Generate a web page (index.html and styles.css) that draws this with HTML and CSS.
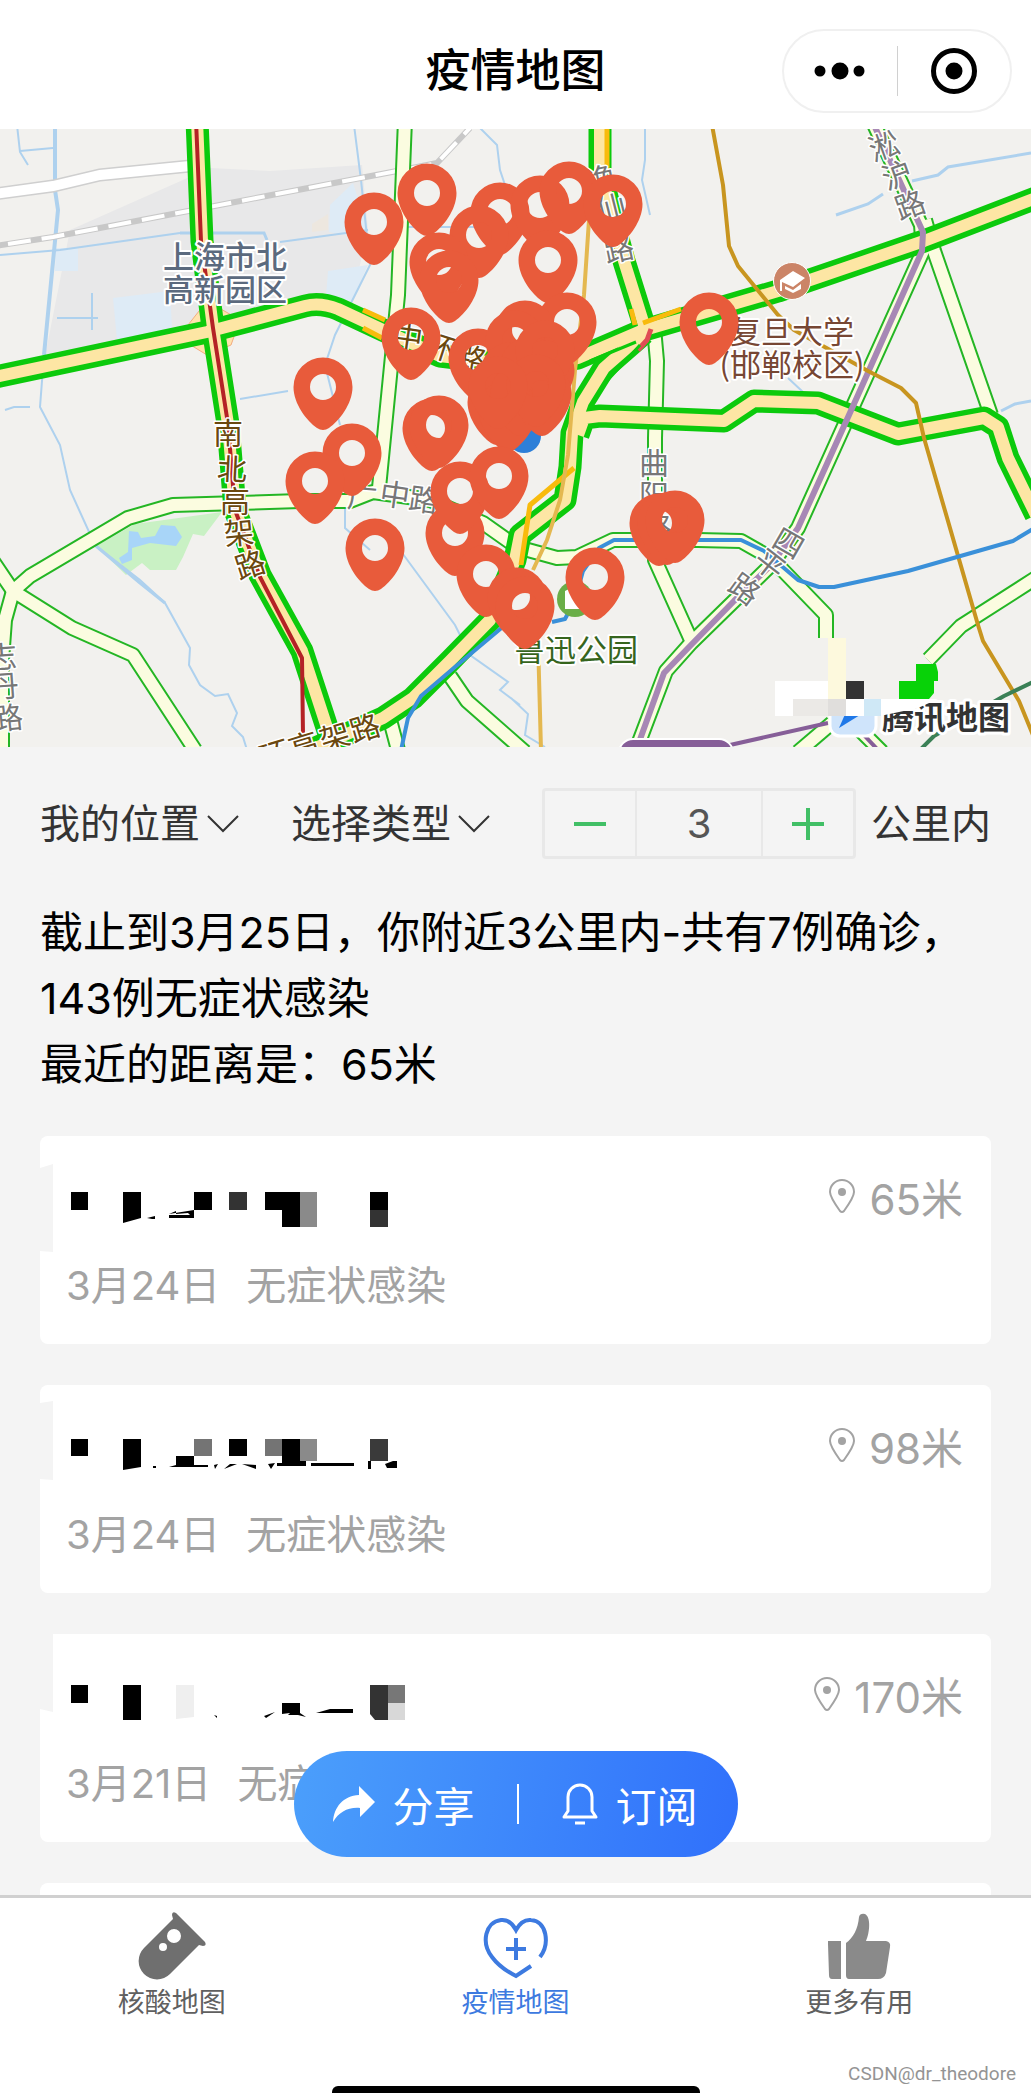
FILE: index.html
```html
<!DOCTYPE html>
<html lang="zh-CN">
<head>
    <meta charset="UTF-8">
    <meta name="viewport" content="width=device-width, initial-scale=1.0">
    <title>疫情地图</title>
    <link rel="stylesheet" href="styles.css">
</head>
<body>
<div class="app">
    <header class="header">
        <h1>疫情地图</h1>
        <div class="capsule">
            <button type="button" aria-label="更多">
                <svg width="52" height="20" viewBox="0 0 52 20"><circle cx="6" cy="10" r="5.5"/><circle cx="26" cy="10" r="8.5"/><circle cx="45" cy="10" r="5.5"/></svg>
            </button>
            <span class="capsule-line"></span>
            <button type="button" aria-label="关闭">
                <svg width="48" height="48" viewBox="0 0 48 48"><circle cx="24" cy="24" r="20.5" fill="none" stroke="#000" stroke-width="5"/><circle cx="24" cy="24" r="8.5"/></svg>
            </button>
        </div>
    </header>

    <svg class="map" viewBox="0 129 1031 618" role="img" aria-label="地图">
        <defs>
            <path id="pin" fill-rule="evenodd" d="M-29.500 0A29.500 29.500 0 0 1 29.500 0C29.500 17 16 34 6 41Q0 45 -6 41C-16 34 -29.500 17 -29.500 0ZM-13 0A13 13 0 1 0 13 0A13 13 0 1 0 -13 0Z"/>
            <g id="minor">
                <path d="M405 120L398 295L378 498"/>
                <path d="M-8 560L13 591L30 576L128 518L173 505L300 501H350L373 492L430 500L483 523L517 547L557 558L577 557L613 540H698L741 541L771 558L826 615V640"/>
                <path d="M13 591L5 620L2 660V755"/>
                <path d="M13 591L72 628L133 655L195 750"/>
                <path d="M450 676L467 701L525 752"/>
                <path d="M390 720L398 750"/>
                <path d="M654 328L657 361L655 438V560L691 640"/>
                <path d="M872 120L921 225L923 251L858 395L798 528L771 565L734 601L691 643L666 671L636 750"/>
                <path d="M925 220L934 251L991 415"/>
                <path d="M928 660L961 626L1036 578"/>
                <path d="M798 752L832 723"/>
                <path d="M858 728L882 752"/>
            </g>
            <g id="major">
                <path d="M-5 377L207 332L305 306Q320 302 338 309L385 331L440 356L520 366L578 358L641 331L778 291L924 241L1036 198"/>
                <path d="M197 120L202 241L213 328L228 424L235 510L260 575L302 651L335 752"/>
                <path d="M300 755L383 718L413 698L450 661L490 620L515 560L520 535L565 500L570 467L572 433L583 402L604 368L644 333"/>
                <path d="M578 435L584 418L600 416L724 421L754 401L818 403L898 434L984 418L998 427L1008 458L1036 515"/>
                <path d="M600 120V171L624 261L644 325"/>
            </g>
        </defs>

        <rect y="129" width="1031" height="618" fill="#f2f1ee"/>
        <path fill="#e8e8e9" d="M70 230L210 168L270 171L362 165L368 230L350 308L310 298L160 340L45 356Z"/>
        <path fill="#deebf6" d="M113 298L170 291L172 328L117 340ZM56 248H78V271H55ZM330 205L353 183L368 230L345 235L329 232ZM328 271L368 265L350 305L326 296Z"/>
        <path fill="#ede7df" d="M312 224L328 214V230L312 232Z"/>

        <!-- park and lake -->
        <path fill="#c9f1c4" d="M96 546L135 524L222 512L204 536L193 534L183 557L176 570H150L142 563L126 575Z"/>
        <path fill="#a8d5f8" d="M129 531L138 532L141 538L155 536L161 525L175 526L182 537L176 546L150 543L132 548V560L122 564L119 558L128 552Z"/>

        <g class="river">
            <path class="river-wide" d="M55 120V190L58 210L44 355"/>
            <path d="M44 355L40 407L60 445L70 490L95 545L140 580L165 603L190 648L189 665L200 685L215 696L228 694L237 713L232 726L243 737L247 750"/>
            <path class="river-thick" d="M96 546L140 583L165 603"/>
            <path d="M17 125L20 152L28 165M20 151L53 148M0 255L60 250L180 233M280 242L368 230M354 125L361 180L370 265L335 335L325 365L340 425M480 128L497 145L500 170L505 185M345 505L345 528L370 550M400 550L455 625L470 655L508 682L500 690L520 705M240 399L288 391M405 227H490M511 698L528 714L525 735L545 747M92 293V330M57 318H98M5 410L14 407H30M645 125V160L642 180L650 215M788 378L803 392"/>
            <path class="river-thick" d="M180 233H264L267 240"/>
            <path class="river-thick" d="M836 215L868 204L883 194M912 181L938 175L948 167L1031 153M1001 411L1015 404L1031 401"/>
        </g>

        <path d="M-5 194L53 186L100 175L190 166" fill="none" stroke="#cfcfcf" stroke-width="13"/>
        <path d="M-5 194L53 186L100 175L190 166" fill="none" stroke="#fff" stroke-width="10"/>
        <path d="M-5 246L53 237L230 203L397 171L437 163L470 128" fill="none" stroke="#c8c8c8" stroke-width="6"/>
        <path d="M8 244L53 237L230 203L397 171L437 163L470 128" fill="none" stroke="#fff" stroke-width="4" stroke-dasharray="23 11"/>
        <path d="M207 301L240 320L231 345L207 355L189 344L188 325Z" fill="#ffe3ad" stroke="#f3ac80"/>

        <use href="#minor" class="road minor-edge"/>
        <use href="#minor" class="road minor-fill"/>
        <use href="#major" class="road major-edge"/>
        <use href="#major" class="road major-fill"/>

        <!-- traffic -->
        <g class="road">
            <path d="M196 120L201 241L213 328L228 424L235 510L260 577L302 658L303 735" stroke="#b42226" stroke-width="4"/>
            <path d="M607 125V172M363 310L385 320M363 328L382 338M631 309L635 325M643 323L681 309M574 468L530 505L521 565" stroke="#f8bb0d" stroke-width="5"/>
            <path d="M651 329L647 340L638 350" stroke="#e04d55" stroke-width="5"/>
            <path d="M606 382L640 345M590 361L636 342" stroke="#0cca0c" stroke-width="3"/>
        </g>

        <!-- metro lines -->
        <g class="metro">
            <path stroke="#e4b850" d="M591 190L584 295L575 370L568 455L560 500L547 540L533 570M538 640L541 750"/>
            <path stroke="#a788b5" stroke-width="6" d="M874 125L923 232L922 251L858 395L798 528L771 565L734 601L691 645L664 673L638 745"/>
            <path stroke="#c8951f" d="M712 125L723 185L729 246L738 266L778 315L794 330L868 371L901 388L916 403L924 438L978 625L983 641L1019 701L1033 735"/>
            <path stroke="#3a90d9" d="M552 622L565 619L575 600L583 571L599 548L614 540H741L764 551L798 580L819 587H834L908 571L1013 541L1033 529M400 755L408 718L421 696L455 667L505 625"/>
            <path stroke="#3a8056" d="M920 750L934 736L1004 696L1033 682"/>
            <path stroke="#865e98" d="M730 745L828 723M862 733L878 750"/>
        </g>
        <rect x="619" y="739" width="114" height="30" rx="14" fill="#865e98" stroke="#fff" stroke-width="2"/>

        <circle cx="792" cy="281" r="18.500" fill="#cb8467" stroke="#fff"/>
        <path fill="#fff" d="M780 280L793 271L805 278L793 287L782 282V291H780ZM785 286L793 290L801 284V289L793 293L785 289Z"/>
        <circle cx="575" cy="599" r="18" fill="#6aae48"/>
        <path fill="#fff" d="M565 591L575 586L580 609H565Z"/>

        <g class="place blue-label">
            <text x="225" y="268">上海市北</text>
            <text x="225" y="301">高新园区</text>
        </g>
        <g class="place brown-label">
            <text x="792" y="343">复旦大学</text>
            <text x="792" y="376">(邯郸校区)</text>
        </g>
        <g class="place green-label">
            <text x="576" y="661">鲁迅公园</text>
        </g>
        <g class="street highway">
            <text x="228" y="444">南</text>
            <text x="232" y="480" transform="rotate(3 232 470)">北</text>
            <text x="235" y="512">高</text>
            <text x="239" y="544" transform="rotate(-6 239 533)">架</text>
            <text x="250" y="576" transform="rotate(-18 250 565)">路</text>
            <text x="275" y="765" transform="rotate(-17 275 755)">环</text>
            <text x="304" y="757" transform="rotate(-17 304 747)">高</text>
            <text x="335" y="748" transform="rotate(-17 335 737)">架</text>
            <text x="365" y="739" transform="rotate(-17 365 728)">路</text>
            <text x="408" y="348" transform="rotate(8 408 337)">中</text>
            <text x="440" y="358" transform="rotate(18 440 347)">环</text>
            <text x="472" y="370" transform="rotate(10 472 359)">路</text>
        </g>
        <g class="street">
            <text x="654" y="474">曲</text>
            <text x="654" y="506">阳</text>
            <text x="657" y="538">路</text>
            <text x="788" y="554" transform="rotate(30 788 544)">四</text>
            <text x="769" y="575" transform="rotate(38 769 565)">平</text>
            <text x="744" y="600" transform="rotate(36 744 590)">路</text>
            <text x="884" y="157" transform="rotate(-20 884 146)">淞</text>
            <text x="897" y="186" transform="rotate(-20 897 175)">沪</text>
            <text x="910" y="216" transform="rotate(-20 910 205)">路</text>
            <text x="362" y="508" transform="rotate(5 362 498)">广</text>
            <text x="395" y="506" transform="rotate(8 395 495)">中</text>
            <text x="424" y="511" transform="rotate(8 424 500)">路</text>
            <text x="601" y="190" transform="rotate(-12 601 180)">逸</text>
            <text x="611" y="219" transform="rotate(-14 611 208)">仙</text>
            <text x="619" y="260" transform="rotate(-12 619 250)">路</text>
            <text x="2" y="668" transform="rotate(-4 2 657)">志</text>
            <text x="4" y="697" transform="rotate(-4 4 686)">丹</text>
            <text x="8" y="729" transform="rotate(-6 8 718)">路</text>
        </g>

        <!-- current position -->
        <circle cx="524" cy="436" r="17" fill="#2d7fd8"/>

        <g fill="#e85b3b">
            <use href="#pin" x="427" y="193"/><use href="#pin" x="374" y="222"/>
            <use href="#pin" x="500" y="212"/><use href="#pin" x="479" y="235"/>
            <use href="#pin" x="540" y="205"/><use href="#pin" x="569" y="191"/>
            <use href="#pin" x="613" y="204"/><use href="#pin" x="548" y="260"/>
            <use href="#pin" x="439" y="262"/><use href="#pin" x="449" y="280"/>
            <use href="#pin" x="411" y="337"/><use href="#pin" x="323" y="387"/>
            <use href="#pin" x="478" y="358"/><use href="#pin" x="567" y="322"/>
            <use href="#pin" x="525" y="330"/><use href="#pin" x="515" y="340"/>
            <use href="#pin" x="510" y="372"/><use href="#pin" x="530" y="366"/>
            <use href="#pin" x="545" y="370"/><use href="#pin" x="545" y="350"/>
            <use href="#pin" x="497" y="402"/><use href="#pin" x="508" y="409"/>
            <use href="#pin" x="520" y="393"/><use href="#pin" x="542" y="393"/>
            <use href="#pin" x="536" y="384"/><use href="#pin" x="498" y="386"/>
            <use href="#pin" x="432" y="428"/><use href="#pin" x="439" y="425"/>
            <use href="#pin" x="352" y="453"/><use href="#pin" x="315" y="481"/>
            <use href="#pin" x="375" y="548"/><use href="#pin" x="455" y="533"/>
            <use href="#pin" x="460" y="491"/><use href="#pin" x="499" y="476"/>
            <use href="#pin" x="486" y="574"/><use href="#pin" x="517" y="597"/>
            <use href="#pin" x="525" y="606"/><use href="#pin" x="595" y="577"/>
            <use href="#pin" x="659" y="523"/><use href="#pin" x="667" y="522"/>
            <use href="#pin" x="675" y="520"/><use href="#pin" x="709" y="322"/>
        </g>

        <!-- map brand -->
        <rect x="738" y="638" width="193" height="78" rx="39" fill="#f2f1ee"/>
        <rect x="830" y="700" width="46" height="36" rx="10" fill="#cfe4fb" stroke="#fff" stroke-width="3"/>
        <path fill="#1f78e8" d="M839 728L846 712L860 715Z"/>
        <text class="brand" x="946" y="729">腾讯地图</text>
        <path fill="#fff" d="M775 681H828V716H775ZM846 699H938L918 708L880 716H846Z"/>
        <path fill="#ebe9e6" d="M793 699H828V716H793Z"/>
        <path fill="#e0dedc" d="M828 699H846V716H828Z"/>
        <path fill="#fdf9dd" d="M828 638H846V699H828Z"/>
        <path fill="#333" d="M846 681H864V699H846Z"/>
        <path fill="#cfe8f6" d="M864 699H881V716H864Z"/>
        <path fill="#08d208" d="M916 664H936L938 672V681H934V693L929 699H899V681H916Z"/>
    </svg>

    <main class="content">
        <div class="filters">
            <label class="picker">
                <select aria-label="位置"><option>我的位置</option></select>
                <svg width="32" height="18" viewBox="0 0 32 18"><path d="M1 1L16 16L31 1"/></svg>
            </label>
            <label class="picker">
                <select aria-label="类型"><option>选择类型</option></select>
                <svg width="32" height="18" viewBox="0 0 32 18"><path d="M1 1L16 16L31 1"/></svg>
            </label>
            <div class="stepper">
                <button type="button" aria-label="减少"><svg width="32" height="32" viewBox="0 0 32 32"><path d="M0 16H32"/></svg></button>
                <input type="text" id="distance" value="3">
                <button type="button" aria-label="增加"><svg width="32" height="32" viewBox="0 0 32 32"><path d="M0 16H32M16 0V32"/></svg></button>
            </div>
            <label class="unit" for="distance">公里内</label>
        </div>

        <p class="summary">截止到3月25日，你附近3公里内-共有7例确诊，<br>143例无症状感染<br>最近的距离是：65米</p>

        <div class="card">
            <svg class="mosaic" width="420" height="120" viewBox="0 0 420 120">
                <path fill="#f4f4f4" d="M0 32L13 28V116L0 115Z"/>
                <path d="M31 56H48V74H31ZM83 56H101V82L83 87ZM154 56H172V74H154ZM225 56H260V91H242V74H225ZM330 56H348V74H330ZM107 82L115 80V83H112ZM129 78L154 74V82H129V79H150L148 77L136 78V75Z"/>
                <path fill="#333" d="M189 56H207V74H189ZM330 74H348V91H330Z"/>
                <path fill="#8a8a8a" d="M260 56H277V91H260Z"/>
            </svg>
            <div class="distance">
                <svg width="26" height="34" viewBox="0 0 26 34"><path d="M13 1A12 12 0 0 0 1 13C1 18 6 25 11 32Q13 34 15 32C20 25 25 18 25 13A12 12 0 0 0 13 1Z"/><circle cx="13" cy="13" r="4"/></svg>
                <span>65米</span>
            </div>
            <div class="info"><span>3月24日</span><span>无症状感染</span></div>
        </div>

        <div class="card">
            <svg class="mosaic" width="420" height="120" viewBox="0 0 420 120">
                <path fill="#f4f4f4" d="M0 18L13 16V95L0 94Z"/>
                <path d="M31 54H48V71H31ZM83 54H101V82L83 85ZM189 54H207V71H189ZM242 54H260V76H266V81H237V78H242ZM136 71H154V80H168V82H129L136 80ZM271 78H314V81H271ZM328 76H331V84H328ZM345 79L353 76H357V83H347ZM113 81H116V83H113ZM174 80L178 79L175 84ZM190 79H197L184 84ZM202 79L216 80V84ZM228 79L235 78L231 84Z"/>
                <path fill="#747474" d="M154 54H172V71H154ZM225 54H242V71H225Z"/>
                <path fill="#8a8a8a" d="M260 54H277V76H260Z"/>
                <path fill="#3a3a3a" d="M330 54H348V76H330Z"/>
            </svg>
            <div class="distance">
                <svg width="26" height="34" viewBox="0 0 26 34"><path d="M13 1A12 12 0 0 0 1 13C1 18 6 25 11 32Q13 34 15 32C20 25 25 18 25 13A12 12 0 0 0 13 1Z"/><circle cx="13" cy="13" r="4"/></svg>
                <span>98米</span>
            </div>
            <div class="info"><span>3月24日</span><span>无症状感染</span></div>
        </div>

        <div class="card">
            <svg class="mosaic" width="420" height="120" viewBox="0 0 420 120">
                <path fill="#f4f4f4" d="M0 0H13V78L0 75Z"/>
                <path d="M31 51H48V69H31ZM83 51H101V86H83ZM242 69H260V79L266 83L258 81H248L250 79L242 80ZM224 82L235 78L226 84ZM276 79L290 75H313V79ZM174 81L177 82V84Z"/>
                <path fill="#efefef" d="M136 51H154V83L136 85Z"/>
                <path fill="#333" d="M330 51H348V86H335L330 80Z"/>
                <path fill="#777" d="M348 51H365V69H348Z"/>
                <path fill="#d8d8d8" d="M348 69H365V86H348Z"/>
            </svg>
            <div class="distance">
                <svg width="26" height="34" viewBox="0 0 26 34"><path d="M13 1A12 12 0 0 0 1 13C1 18 6 25 11 32Q13 34 15 32C20 25 25 18 25 13A12 12 0 0 0 13 1Z"/><circle cx="13" cy="13" r="4"/></svg>
                <span>170米</span>
            </div>
            <div class="info"><span>3月21日</span><span>无症状感染</span></div>
        </div>

        <div class="card"></div>

        <div class="actions">
            <button type="button">
                <svg width="44" height="38" viewBox="0 0 44 38"><path fill="#fff" d="M27 1L43 17L28 32V23C16 22 7 27 1 37C2 22 11 11 27 10Z"/></svg>
                <span>分享</span>
            </button>
            <i></i>
            <button type="button">
                <svg width="38" height="44" viewBox="0 0 38 44"><path fill="none" stroke="#fff" stroke-width="3" stroke-linejoin="round" d="M7 29V15A12 12 0 0 1 31 15V29L35 35H3ZM14 41H24"/></svg>
                <span>订阅</span>
            </button>
        </div>
    </main>

    <nav class="tabbar">
        <a href="#">
            <svg width="72" height="72" viewBox="0 0 72 72"><path fill="#6f6f6f" fill-rule="evenodd" d="M36 4Q36 0 40 2L69 31Q71 35 67 35L63 34L34 63A18 18 0 0 1 8 37L37 8ZM38 18A7 7 0 1 0 38 32A7 7 0 1 0 38 18ZM27 32A4 4 0 1 0 27 40A4 4 0 1 0 27 32Z"/></svg>
            <span>核酸地图</span>
        </a>
        <a href="#" class="active">
            <svg width="72" height="72" viewBox="0 0 72 72"><g fill="none" stroke="#3d7ae0" stroke-width="4"><path d="M60 46C70 33 67 10 51 9Q42 8 36 19Q30 8 21 9C5 11 1 32 12 46Q20 57 36 65L51 55"/><path d="M36 27V49M26 38H46"/></g></svg>
            <span>疫情地图</span>
        </a>
        <a href="#">
            <svg width="72" height="72" viewBox="0 0 72 72"><path fill="#8a8a8a" d="M5 30H18V68H9Q6 68 6 64L5 33ZM23 32C30 27 35 18 36 6Q37 2 42 3C48 6 47 21 43 30H63Q68 31 67 36L63 62Q61 68 55 68H26Q23 68 23 64Z"/></svg>
            <span>更多有用</span>
        </a>
        <div class="home-bar"></div>
        <div class="watermark">CSDN@dr_theodore</div>
    </nav>
</div>
</body>
</html>
```

FILE: styles.css
```css
* {
    box-sizing: border-box;
}
body {
    margin: 0;
    font-family: Inter, "Noto Sans CJK SC", sans-serif;
    color: #000;
}
button, input, select {
    font: inherit;
    color: inherit;
    background: none;
    border: 0;
    padding: 0;
    margin: 0;
}
.app {
    display: flex;
    flex-direction: column;
    height: 100vh;
    overflow: hidden;
    background-color: #f4f4f4;
}

/* header */
.header {
    flex: none;
    display: grid;
    grid-template-columns: 1fr auto 1fr;
    align-items: center;
    padding: 29px 19px 16px;
    background-color: #fff;
}
.header h1 {
    grid-column: 2;
    margin: 0;
    font-size: 45px;
    line-height: 64px;
    font-weight: 500;
}
.capsule {
    justify-self: end;
    display: flex;
    align-items: center;
    width: 230px;
    height: 84px;
    border: 2px solid #f0f0f0;
    border-radius: 42px;
}
.capsule button {
    flex: 1;
    display: flex;
    justify-content: center;
}
.capsule-line {
    width: 1px;
    height: 50px;
    background-color: #d0d0d0;
}

/* map */
.map {
    flex: none;
    display: block;
    width: 100%;
    height: auto;
}
.river {
    fill: none;
    stroke: #aed1ee;
    stroke-width: 2;
}
.river-wide {
    stroke-width: 4;
}
.river-thick {
    stroke-width: 3;
}
.road, .metro {
    fill: none;
    stroke-linejoin: round;
}
.metro {
    stroke-width: 4;
}
.minor-edge {
    stroke: #24b624;
    stroke-width: 16;
}
.minor-fill {
    stroke: #fbfce0;
    stroke-width: 12;
}
.major-edge {
    stroke: #0cca0c;
    stroke-width: 23;
}
.major-fill {
    stroke: #fde6a4;
    stroke-width: 12;
}
.place, .street, .brand {
    text-anchor: middle;
    font-family: "Noto Sans CJK SC", sans-serif;
    paint-order: stroke;
    stroke: #fff;
    stroke-width: 4;
    stroke-linejoin: round;
}
.place {
    font-size: 31px;
}
.street {
    font-size: 30px;
    fill: #777;
    stroke-width: 3;
}
.highway {
    fill: #6b480f;
}
.blue-label {
    fill: #5b6a7e;
    font-weight: 500;
}
.brown-label {
    fill: #774734;
}
.green-label {
    fill: #36651d;
}
.brand {
    font-size: 32px;
    font-weight: 700;
    fill: #333;
    stroke-width: 6;
}

/* content */
.content {
    position: relative;
    flex: 1;
    min-height: 0;
    overflow: hidden;
    padding: 41px 40px 0;
}
.filters {
    display: flex;
    align-items: center;
    font-size: 40px;
    color: #333;
}
.picker {
    display: flex;
    align-items: center;
    gap: 7px;
    margin-right: 52px;
}
.picker select {
    appearance: none;
    width: 160px;
    height: 60px;
    line-height: 60px;
}
.picker svg {
    fill: none;
    stroke: #333;
    stroke-width: 2;
}
.stepper {
    display: flex;
    width: 314px;
    height: 71px;
    border: 3px solid #e8e8e8;
    border-radius: 4px;
    color: #555;
}
.stepper button {
    flex: 1;
    display: flex;
    align-items: center;
    justify-content: center;
}
.stepper svg {
    stroke: #41bf66;
    stroke-width: 4;
}
.stepper input {
    width: 128px;
    border: solid #e8e8e8;
    border-width: 0 2px;
    text-align: center;
}
.unit {
    margin-left: auto;
    line-height: 60px;
}
.summary {
    margin: 40px 0 39px;
    font-size: 43px;
    line-height: 66px;
    white-space: nowrap;
}
.card {
    position: relative;
    height: 208px;
    margin-bottom: 41px;
    padding: 28px 28px 0 26px;
    border-radius: 8px;
    background-color: #fff;
    color: #a3a3a3;
    font-size: 40px;
}
/* pixelated address over the card */
.mosaic {
    position: absolute;
    top: 0;
    left: 0;
}
.distance {
    display: flex;
    justify-content: flex-end;
    align-items: center;
    gap: 14px;
    height: 64px;
    font-size: 42px;
}
.distance svg {
    fill: none;
    stroke: #a3a3a3;
    stroke-width: 2;
}
.distance circle {
    fill: #a3a3a3;
    stroke: none;
}
.info {
    display: flex;
    gap: 26px;
    margin-top: 26px;
    line-height: 64px;
}

/* floating share bar */
.actions {
    position: absolute;
    left: 50%;
    bottom: 38px;
    transform: translateX(-50%);
    display: flex;
    align-items: center;
    justify-content: space-between;
    width: 444px;
    height: 106px;
    padding: 0 40px 0 38px;
    border-radius: 53px;
    background: linear-gradient(100deg, #4b9ffb, #3070fb);
    color: #fff;
    font-size: 41px;
}
.actions button {
    display: flex;
    align-items: center;
    gap: 17px;
}
.actions i {
    width: 2px;
    height: 40px;
    background-color: #fff;
}

/* tab bar */
.tabbar {
    position: relative;
    flex: none;
    display: flex;
    height: 198px;
    padding-top: 13px;
    border-top: 3px solid #d0d0d0;
    background-color: #fff;
}
.tabbar a {
    flex: 1;
    display: flex;
    flex-direction: column;
    align-items: center;
    color: #606060;
    font-size: 27px;
    line-height: 40px;
    text-decoration: none;
}
.tabbar .active {
    color: #3d7ae0;
}
.home-bar {
    position: absolute;
    left: 50%;
    bottom: 0;
    width: 368px;
    height: 7px;
    transform: translateX(-50%);
    border-radius: 6px 6px 0 0;
    background-color: #000;
}
.watermark {
    position: absolute;
    right: 15px;
    bottom: 6px;
    color: #949494;
    font-family: Roboto, sans-serif;
    font-size: 19px;
    line-height: 26px;
}
```
